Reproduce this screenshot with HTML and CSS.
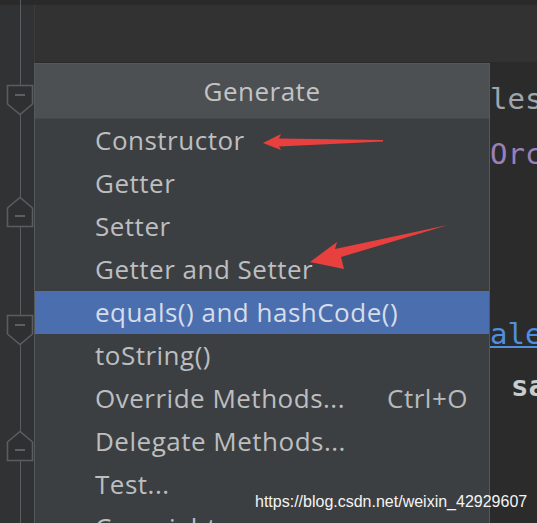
FILE: index.html
```html
<!DOCTYPE html>
<html>
<head>
<meta charset="utf-8">
<link rel="stylesheet" href="styles.css">
</head>
<body>
<div class="editor">
  <div class="gutter">
    <div class="fold-line"></div>
    <div class="markers">
      <svg class="marker m1" width="28" height="32" viewBox="0 0 28 32"><path d="M1.5 1.5 H26.5 V20 L14 30.5 L1.5 20 Z" fill="#2e3032" stroke="#5b5e60" stroke-width="1.6"/><path d="M9 11 H19" stroke="#6a6d70" stroke-width="1.6"/></svg>
      <svg class="marker m2" width="28" height="32" viewBox="0 0 28 32"><path d="M1.5 30.5 H26.5 V12 L14 1.5 L1.5 12 Z" fill="#2e3032" stroke="#5b5e60" stroke-width="1.6"/><path d="M9 20 H19" stroke="#6a6d70" stroke-width="1.6"/></svg>
      <svg class="marker m3" width="28" height="32" viewBox="0 0 28 32"><path d="M1.5 1.5 H26.5 V20 L14 30.5 L1.5 20 Z" fill="#2e3032" stroke="#5b5e60" stroke-width="1.6"/><path d="M9 11 H19" stroke="#6a6d70" stroke-width="1.6"/></svg>
      <svg class="marker m4" width="28" height="32" viewBox="0 0 28 32"><path d="M1.5 30.5 H26.5 V12 L14 1.5 L1.5 12 Z" fill="#2e3032" stroke="#5b5e60" stroke-width="1.6"/><path d="M9 20 H19" stroke="#6a6d70" stroke-width="1.6"/></svg>
    </div>
  </div>
  <div class="code">
    <div class="top-strip"><span class="orange">.</span></div>
    <div class="line l1"><span class="plain">les</span></div>
    <div class="line l2"><span class="purple">Orc</span></div>
    <div class="line l3"><span class="link">ale</span></div>
    <div class="line l4"><span class="bold">sa</span></div>
  </div>
</div>

<div class="popup">
  <div class="popup-title">Generate</div>
  <ul class="menu">
    <li class="item">Constructor</li>
    <li class="item">Getter</li>
    <li class="item">Setter</li>
    <li class="item">Getter and Setter</li>
    <li class="item selected">equals() and hashCode()</li>
    <li class="item">toString()</li>
    <li class="item"><span>Override Methods...</span><span class="shortcut">Ctrl+O</span></li>
    <li class="item">Delegate Methods...</li>
    <li class="item">Test...</li>
    <li class="item">Copyright</li>
  </ul>
</div>

<svg class="arrows" width="537" height="523" viewBox="0 0 537 523">
  <polygon points="263,143 281,134 279,138.5 383,140 383,141.5 279,146.5 281,150" fill="#e8403f"/>
  <polygon points="310,262 337,242 335,249 448,225 341,257 344,269" fill="#e8403f"/>
</svg>

<div class="watermark">https://blog.csdn.net/weixin_42929607</div>
</body>
</html>
```

FILE: styles.css
```css
html, body {
  margin: 0;
  padding: 0;
}
body {
  width: 537px;
  height: 523px;
  overflow: hidden;
  background: #2b2b2b;
  position: relative;
  font-family: "Open Sans", "Noto Sans", sans-serif;
}
.editor {
  display: flex;
  height: 523px;
  border-top: 5px solid #2a2a2a;
  box-sizing: border-box;
}
.gutter {
  width: 34px;
  flex: none;
  background: #313233;
  position: relative;
  border-right: 1px solid #3a3c3e;
}
.fold-line {
  position: absolute;
  left: 20px;
  top: -5px;
  bottom: 0;
  width: 1px;
  background: #5a5d60;
}
.markers {
  position: relative;
  display: flex;
  flex-direction: column;
  padding-top: 79px;
  padding-left: 6px;
}
.marker { display: block; }
.m2 { margin-top: 80px; }
.m3 { margin-top: 86px; }
.m4 { margin-top: 84px; }
.code {
  flex: 1;
  display: flex;
  flex-direction: column;
  font-family: "DejaVu Sans Mono", "Liberation Mono", monospace;
  font-size: 29px;
  padding-left: 455px;
  background: linear-gradient(#323232, #323232) no-repeat 0 0 / 100% 57px, #2b2b2b;
}
.top-strip {
  height: 57px;
  position: relative;
}
.orange {
  position: absolute;
  left: 95px;
  top: -27px;
  color: #cc7832;
  font-size: 20px;
}
.line {
  height: 40px;
  line-height: 40px;
  white-space: nowrap;
}
.l1 { margin-top: 17px; }
.l2 { margin-top: 15px; }
.l3 { margin-top: 140px; }
.l4 { margin-top: 12px; }
.plain { color: #a0a6ad; }
.purple { color: #9b80b8; }
.link { color: #4f8fdf; text-decoration: underline; }
.bold { color: #c7ccd1; font-weight: bold; padding-left: 21px; }

.popup {
  position: absolute;
  left: 34px;
  top: 63px;
  width: 454px;
  height: 480px;
  background: #3c3f41;
  border: 1px solid #56595b;
  color: #bcbec0;
  font-size: 26px;
  letter-spacing: 0.5px;
}
.popup-title {
  height: 54px;
  line-height: 54px;
  background: #4d5053;
  text-align: center;
  color: #c2c4c6;
  border-bottom: 1px solid #45484a;
}
.menu {
  list-style: none;
  margin: 0;
  padding: 0;
}
.item {
  height: 43px;
  line-height: 43px;
  padding-left: 60px;
  padding-right: 21px;
  display: flex;
  justify-content: space-between;
  white-space: nowrap;
}
.item.selected {
  background: #4b6eaf;
  color: #d6dde9;
}
.shortcut {
  color: #b8babc;
}
.arrows {
  position: absolute;
  left: 0;
  top: 0;
  pointer-events: none;
}
.watermark {
  position: absolute;
  left: 255px;
  top: 493px;
  font-family: "Liberation Sans", Arial, sans-serif;
  font-size: 16px;
  color: #f4f4f4;
  white-space: nowrap;
}
```
